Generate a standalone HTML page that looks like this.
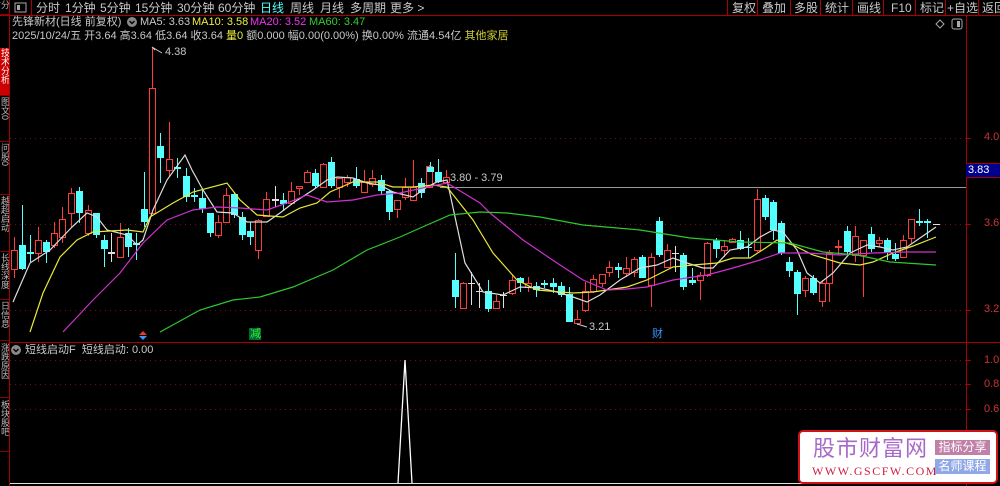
<!DOCTYPE html>
<html><head><meta charset="utf-8"><style>
*{margin:0;padding:0;box-sizing:border-box}
body{width:1000px;height:486px;background:#000;overflow:hidden;position:relative;font-family:"Liberation Sans","Noto Sans CJK SC",sans-serif;color:#c8c8c8}
.t{position:absolute;white-space:nowrap;font-size:12px;line-height:14px}
.s{position:absolute;white-space:nowrap;font-size:11px;line-height:13px}
.tab{position:absolute;left:0;width:9px;font-size:9px;line-height:9px;writing-mode:vertical-rl;color:#bbb;overflow:hidden;border-bottom:1px solid #800}
</style></head><body>
<svg id="sv" width="1000" height="486" style="position:absolute;left:0;top:0">
<line x1="0" y1="15.5" x2="1000" y2="15.5" stroke="#a00" />
<line x1="9.5" y1="0" x2="9.5" y2="486" stroke="#a00"/>
<line x1="966.5" y1="15" x2="966.5" y2="486" stroke="#a00"/>
<line x1="10" y1="342.5" x2="1000" y2="342.5" stroke="#a00"/>
<g stroke="#a00" stroke-width="1">
<line x1="727.5" y1="0" x2="727.5" y2="15"/><line x1="757.5" y1="0" x2="757.5" y2="15"/><line x1="790.5" y1="0" x2="790.5" y2="15"/><line x1="820.5" y1="0" x2="820.5" y2="15"/><line x1="852.5" y1="0" x2="852.5" y2="15"/><line x1="883.5" y1="0" x2="883.5" y2="15"/><line x1="915.5" y1="0" x2="915.5" y2="15"/><line x1="945.5" y1="0" x2="945.5" y2="15"/><line x1="978.5" y1="0" x2="978.5" y2="15"/>
<line x1="31.5" y1="0" x2="31.5" y2="15"/>
</g>
<rect x="15" y="3" width="11" height="9" fill="none" stroke="#aaa"/><rect x="17" y="5" width="3" height="5" fill="#aaa"/>
<g stroke="#701010" stroke-dasharray="1 4">
<line x1="10" y1="138.5" x2="966" y2="138.5"/><line x1="10" y1="224.5" x2="966" y2="224.5"/><line x1="10" y1="310.5" x2="966" y2="310.5"/>
<line x1="10" y1="360.5" x2="966" y2="360.5"/><line x1="10" y1="384.5" x2="966" y2="384.5"/><line x1="10" y1="409.5" x2="966" y2="409.5"/>
</g>
<g stroke="#a00"><line x1="966" y1="138.5" x2="971" y2="138.5"/><line x1="966" y1="224.5" x2="971" y2="224.5"/><line x1="966" y1="310.5" x2="971" y2="310.5"/><line x1="966" y1="360.5" x2="971" y2="360.5"/><line x1="966" y1="384.5" x2="971" y2="384.5"/><line x1="966" y1="409.5" x2="971" y2="409.5"/></g>
<line x1="440" y1="187.5" x2="966" y2="187.5" stroke="#999"/>
<rect x="966" y="164" width="34" height="13" fill="#00008c"/>
<line x1="966" y1="163.5" x2="1000" y2="163.5" stroke="#a00"/><line x1="966" y1="177.5" x2="1000" y2="177.5" stroke="#a00"/>
<path d="M940 20 L944 24 L940 28 L936 24Z" fill="none" stroke="#aaa"/>
<rect x="952" y="19" width="10" height="10" rx="2" fill="none" stroke="#aaa"/><rect x="957" y="21" width="3" height="6" fill="#aaa"/>
<circle cx="132" cy="22" r="5" fill="#888"/><path d="M129.5 21 L132 23.5 L134.5 21" stroke="#000" fill="none" stroke-width="1.4"/>
<circle cx="16" cy="350" r="5" fill="#888"/><path d="M13.5 349 L16 351.5 L18.5 349" stroke="#000" fill="none" stroke-width="1.4"/>
<g id="cd"></g>
<g id="ma" fill="none" stroke-width="1.2"></g>
<path d="M155 50 L152 47 M152 47 L162 53" stroke="#ccc" fill="none"/>
<path d="M577 324 L587 327" stroke="#ccc"/>
<path d="M143 331 L147 335 L139 335Z" fill="#e33"/><path d="M139 336 L147 336 L143 340Z" fill="#39f"/>
<rect x="249" y="328" width="12" height="12" fill="#063"/>
<line x1="10" y1="483.5" x2="966" y2="483.5" stroke="#ddd"/>
<path d="M398 483 L405 360 L412 483" fill="none" stroke="#fff" stroke-width="1.3"/>
</svg>
<div style="position:absolute;left:0;top:48px;width:9px;height:48px;background:#c00"></div>
<div class="tab" style="top:48px;height:48px;color:#fff">技术分析</div>
<div class="tab" style="top:97px;height:45px">图文0</div>
<div class="tab" style="top:143px;height:52px">问股0</div>
<div class="tab" style="top:196px;height:56px">越超启动</div>
<div class="tab" style="top:253px;height:47px">长线深度</div>
<div class="tab" style="top:301px;height:40px">日信息</div>
<div class="tab" style="top:343px;height:55px">涨跌原因</div>
<div class="tab" style="top:400px;height:52px">板块股吧</div>
<div class="tab" style="top:0;height:15px">分时</div>

<div class="t" style="left:36px;top:1px">分时</div>
<div class="t" style="left:65px;top:1px">1分钟</div>
<div class="t" style="left:100px;top:1px">5分钟</div>
<div class="t" style="left:135px;top:1px">15分钟</div>
<div class="t" style="left:177px;top:1px">30分钟</div>
<div class="t" style="left:218px;top:1px">60分钟</div>
<div class="t" style="left:260px;top:1px;color:#5ff">日线</div>
<div class="t" style="left:290px;top:1px">周线</div>
<div class="t" style="left:320px;top:1px">月线</div>
<div class="t" style="left:350px;top:1px">多周期</div>
<div class="t" style="left:390px;top:1px">更多 &gt;</div>
<div class="t" style="left:732px;top:1px">复权</div>
<div class="t" style="left:762px;top:1px">叠加</div>
<div class="t" style="left:794px;top:1px">多股</div>
<div class="t" style="left:825px;top:1px">统计</div>
<div class="t" style="left:857px;top:1px">画线</div>
<div class="t" style="left:891px;top:1px">F10</div>
<div class="t" style="left:920px;top:1px">标记</div>
<div class="t" style="left:947px;top:1px">+自选</div>
<div class="t" style="left:982px;top:1px">返回</div>

<div class="s" style="left:12px;top:16px">先锋新材(日线 前复权)</div>
<div class="s" style="left:140px;top:16px">MA5: 3.63</div>
<div class="s" style="left:192px;top:16px;color:#ee4">MA10: 3.58</div>
<div class="s" style="left:250px;top:16px;color:#e3e">MA20: 3.52</div>
<div class="s" style="left:309px;top:16px;color:#3c3">MA60: 3.47</div>
<div class="s" style="left:12px;top:30px">2025/10/24/五 开3.64 高3.64 低3.64 收3.64 <span style="color:#ee4">量0</span> 额0.000 幅0.00(0.00%) 换0.00% 流通4.54亿 <span style="color:#cc3">其他家居</span></div>
<div class="s" style="left:165px;top:46px">4.38</div>
<div class="s" style="left:589px;top:321px">3.21</div>
<div class="s" style="left:450px;top:172px">3.80 - 3.79</div>
<div class="s" style="left:250px;top:328px;color:#3e3">减</div>
<div class="s" style="left:652px;top:328px;color:#39f">财</div>
<div class="s" style="left:968px;top:164px;color:#fff">3.83</div>
<div class="s" style="left:984px;top:131px;color:#c33">4.0</div>
<div class="s" style="left:984px;top:217px;color:#c33">3.6</div>
<div class="s" style="left:984px;top:303px;color:#c33">3.2</div>
<div class="s" style="left:984px;top:354px;color:#c33">1.0</div>
<div class="s" style="left:984px;top:378px;color:#c33">0.8</div>
<div class="s" style="left:984px;top:403px;color:#c33">0.6</div>
<div class="s" style="left:25px;top:344px">短线启动F&nbsp; 短线启动: 0.00</div>

<div style="position:absolute;left:798px;top:430px;width:200px;height:54px;background:#fff;border:2px solid #d0101a;border-radius:5px"></div>
<div style="position:absolute;left:813px;top:434px;font-size:22px;line-height:26px;color:#a868c8;letter-spacing:1px;font-family:'Noto Sans CJK SC',sans-serif">股市财富网</div>
<div style="position:absolute;left:812px;top:464px;font-size:12px;color:#d02040;font-family:'Liberation Serif',serif;letter-spacing:1.5px">WWW.GSCFW.COM</div>
<div style="position:absolute;left:935px;top:440px;width:55px;height:15px;background:#c080a8;color:#fff;font-size:12px;line-height:15px;text-align:center">指标分享</div>
<div style="position:absolute;left:935px;top:459px;width:55px;height:15px;background:#90a8e8;color:#fff;font-size:12px;line-height:15px;text-align:center">名师课程</div>
<script>
var C=[[14,250,269,237,278,'r'],[22,245,269,205,270,'c'],[30,252,254,235,262,'c'],[38,240,253,227,262,'r'],[46,242,252,240,263,'c'],[54,233,245,222,248,'r'],[62,219,237,207,243,'r'],[71,193,213,188,227,'r'],[79,191,213,187,223,'c'],[88,210,233,205,236,'r'],[96,213,235,213,238,'c'],[104,240,249,235,267,'c'],[111,252,254,233,262,'w'],[120,237,257,223,258,'r'],[128,233,247,228,257,'c'],[136,243,245,233,260,'c'],[144,209,222,172,227,'c'],[152,88,213,47,213,'r'],[160,146,158,133,183,'c'],[169,159,170,122,177,'r'],[177,167,169,158,178,'c'],[186,176,197,168,202,'c'],[194,195,197,188,202,'c'],[202,198,209,190,213,'c'],[210,213,233,213,237,'c'],[218,222,235,215,238,'r'],[226,195,222,188,222,'r'],[234,194,215,192,218,'c'],[242,217,235,212,240,'c'],[250,231,237,222,245,'c'],[258,220,250,219,259,'r'],[266,199,216,192,217,'r'],[275,199,201,186,207,'w'],[283,200,204,193,210,'c'],[291,191,203,182,205,'r'],[299,186,188,186,195,'r'],[307,172,182,170,183,'r'],[315,173,186,169,188,'c'],[323,164,187,163,188,'r'],[331,162,186,157,188,'c'],[339,178,187,178,198,'r'],[347,177,182,175,187,'r'],[356,179,186,167,188,'c'],[364,182,192,170,193,'r'],[372,178,184,170,187,'r'],[381,180,191,175,195,'c'],[389,191,212,190,220,'c'],[397,200,209,200,218,'r'],[405,187,197,178,200,'r'],[413,187,200,160,200,'r'],[421,183,193,178,198,'c'],[429,166,187,165,188,'r'],[430,167,172,162,172,'c'],[438,172,182,159,183,'c'],[446,177,182,170,183,'r'],
[455,280,297,253,308,'c'],[463,283,308,282,308,'r'],[471,283,284,272,305,'w'],[479,291,292,283,308,'w'],[488,291,309,280,312,'c'],[496,301,308,295,308,'r'],[503,295,296,292,308,'w'],[512,280,293,275,295,'r'],[520,278,283,277,292,'c'],[528,283,287,277,292,'r'],[536,286,290,282,297,'c'],[544,283,285,280,288,'c'],[553,283,287,278,293,'c'],[561,286,295,282,297,'c'],[569,294,322,287,322,'c'],[577,319,323,310,325,'r'],[585,291,310,282,312,'r'],[593,279,291,275,293,'r'],[602,274,283,274,287,'r'],[609,267,272,261,277,'r'],[618,267,270,263,278,'c'],[626,268,273,257,277,'r'],[634,259,272,257,277,'r'],[642,257,278,255,278,'c'],[651,257,285,253,307,'r'],[659,221,255,217,257,'c'],[667,250,267,244,268,'r'],[675,253,254,246,272,'w'],[683,255,287,253,290,'c'],[692,280,283,268,285,'c'],[700,275,280,272,300,'r'],[707,243,275,242,277,'r'],[716,240,249,238,258,'c'],[724,246,250,240,257,'r'],[732,239,242,238,243,'r'],[740,240,249,231,250,'c'],[748,247,248,238,258,'c'],[757,199,250,189,252,'r'],[765,198,217,195,220,'c'],[773,202,230,200,240,'c'],[781,223,253,221,255,'c'],[789,262,271,257,277,'c'],[797,272,294,270,315,'c'],[805,278,290,276,297,'r'],[813,278,293,275,295,'c'],[822,283,301,280,307,'r'],[829,253,283,250,302,'r'],[838,246,247,240,255,'r'],[847,231,252,226,255,'c'],[855,236,255,226,262,'r'],[863,240,255,240,297,'r'],[871,234,249,227,252,'c'],[879,240,243,237,247,'r'],[887,240,253,238,260,'c'],[895,254,259,243,261,'c'],[903,240,257,235,258,'r'],[911,219,238,219,243,'r'],[919,221,223,209,226,'c'],[927,221,223,219,238,'c'],[936,224,225,224,225,'w']];
var g='';C.forEach(function(d){var x=d[0],col=d[5]=='r'?'#ff3c3c':(d[5]=='c'?'#54ffff':'#e0e0e0');
g+='<line x1="'+(x+.5)+'" y1="'+d[3]+'" x2="'+(x+.5)+'" y2="'+d[4]+'" stroke="'+col+'"/>';
var h=Math.max(1,d[2]-d[1]);
if(d[5]=='r')g+='<rect x="'+(x-2.5)+'" y="'+(d[1]+.5)+'" width="6" height="'+h+'" fill="#000" stroke="'+col+'"/>';
else g+='<rect x="'+(x-3)+'" y="'+d[1]+'" width="7" height="'+h+'" fill="'+col+'"/>';});
document.getElementById('cd').innerHTML=g;
var M={'#ddd':[13,302,30,263,50,250,72,227,87,213,97,217,107,230,127,235,137,245,143,240,153,210,167,180,185,155,192,170,203,190,217,212,233,213,247,222,267,222,280,213,293,203,313,190,327,180,337,177,353,178,367,183,380,185,393,192,413,197,427,187,437,182,447,180,465,263,483,292,490,293,503,295,520,287,540,288,557,292,573,297,587,302,600,295,620,280,640,268,657,265,673,258,687,263,703,268,713,268,730,250,747,247,760,237,773,230,783,232,797,250,807,273,820,283,833,273,850,253,867,245,880,247,893,250,907,247,920,238,936,227],
'#e8e83a':[30,332,43,293,60,257,77,240,93,232,110,231,127,230,143,232,150,217,173,203,193,192,227,183,240,200,257,215,283,217,300,208,317,203,330,192,353,182,377,182,393,187,413,187,433,185,447,187,473,220,493,253,517,280,537,290,573,293,593,292,627,287,647,280,673,267,693,265,717,263,733,258,750,258,767,247,777,240,793,245,813,255,840,263,860,265,873,262,893,253,913,246,936,237],
'#d030d0':[63,332,93,300,120,273,143,243,167,220,193,210,217,207,240,208,267,210,287,203,307,195,327,202,353,200,377,195,400,193,427,187,447,183,480,203,490,213,523,240,557,263,583,280,607,290,627,289,647,287,673,280,707,275,733,268,760,260,780,253,807,253,840,255,873,253,907,252,936,252],
'#2ec82e':[160,332,200,310,233,300,260,297,293,287,333,270,367,250,400,237,427,225,450,215,480,212,507,213,540,217,583,225,640,230,690,238,740,242,790,243,823,252,857,255,890,262,936,265]};
var s='';for(var k in M){var p=M[k],q='';for(var i=0;i<p.length;i+=2)q+=(i?' L':'M')+p[i]+' '+p[i+1];s+='<path d="'+q+'" stroke="'+k+'"/>';}
document.getElementById('ma').innerHTML=s;
</script>
</body></html>
